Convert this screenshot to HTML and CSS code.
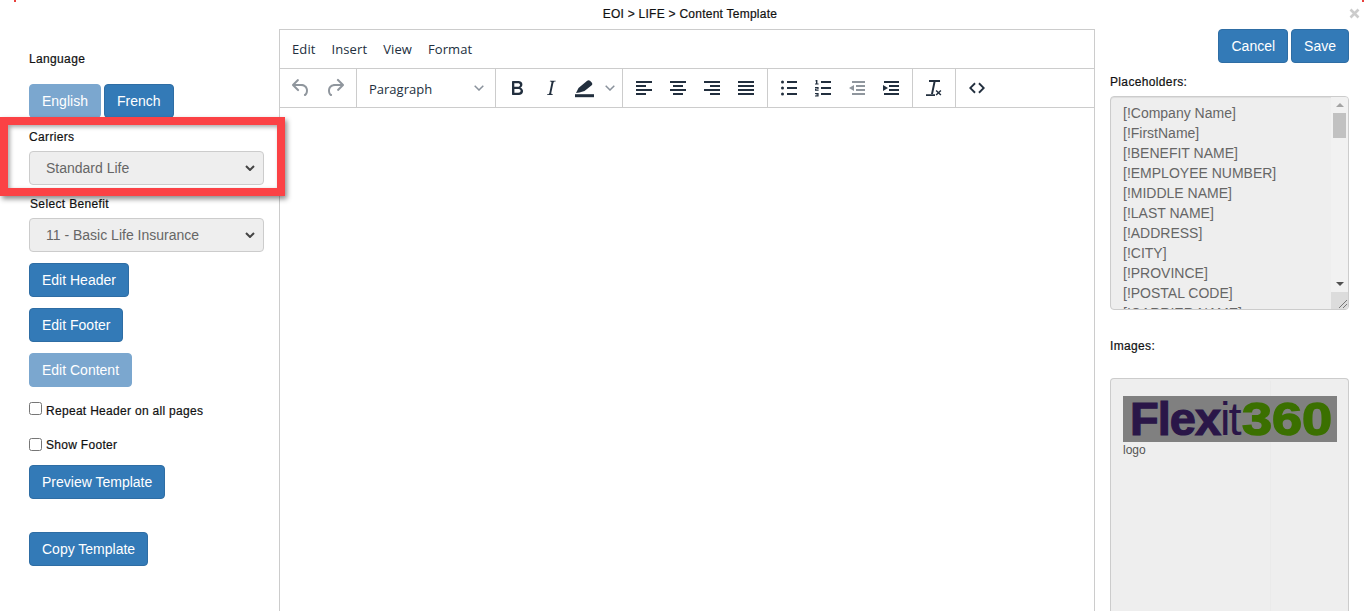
FILE: index.html

```html
<!DOCTYPE html>
<html lang="en">
<head>
  <meta charset="UTF-8">
  <title>EOI > LIFE > Content Template</title>
  <link rel="stylesheet" href="styles.css">
</head>
<body>

  <span class="corner-mark corner-left"></span>
  <span class="corner-mark corner-right"></span>

  <header class="title-bar">
    <span class="title">EOI &gt; LIFE &gt; Content Template</span>
    <svg class="close" viewBox="0 0 11 11"><path d="M1.500 1.500l8 8M9.500 1.500l-8 8" stroke="#ccc" stroke-width="2.600" fill="none"/></svg>
  </header>

  <main class="layout">

    <aside class="left-col">
      <div class="label label-language">Language</div>
      <div class="btn-row">
        <button class="btn btn-faded" type="button">English</button>
        <button class="btn" type="button">French</button>
      </div>

      <div class="label label-carriers">Carriers</div>
      <div class="select-box">
        <span>Standard Life</span>
        <svg class="select-arrow" viewBox="0 0 10 6"><path d="M1 1l4 4 4-4" fill="none" stroke="#444" stroke-width="2"/></svg>
      </div>

      <div class="label label-benefit">Select Benefit</div>
      <div class="select-box">
        <span>11 - Basic Life Insurance</span>
        <svg class="select-arrow" viewBox="0 0 10 6"><path d="M1 1l4 4 4-4" fill="none" stroke="#444" stroke-width="2"/></svg>
      </div>

      <div class="stack">
        <button class="btn" type="button">Edit Header</button>
        <button class="btn" type="button">Edit Footer</button>
        <button class="btn btn-faded" type="button">Edit Content</button>
      </div>

      <label class="check check-header"><input type="checkbox"> Repeat Header on all pages</label>
      <label class="check check-footer"><input type="checkbox"> Show Footer</label>

      <button class="btn btn-preview" type="button">Preview Template</button>
      <button class="btn btn-copy" type="button">Copy Template</button>
    </aside>

    <section class="editor">
      <nav class="menubar">
        <span class="menu-item">Edit</span>
        <span class="menu-item">Insert</span>
        <span class="menu-item">View</span>
        <span class="menu-item">Format</span>
      </nav>
      <div class="toolbar">
        <div class="tool-group">
          <span class="tool tool-off"><svg viewBox="0 0 24 24"><path d="M6.4 8H12c3.7 0 6.2 2 6.8 5.1.6 2.7-.4 5.6-2.3 6.8a1 1 0 0 1-1-1.8c1.1-.6 1.8-2.7 1.4-4.6-.5-2.1-2.1-3.5-4.9-3.5H6.4l3.3 3.3a1 1 0 1 1-1.4 1.4l-5-5a1 1 0 0 1 0-1.4l5-5a1 1 0 0 1 1.4 1.4L6.4 8z"/></svg></span>
          <span class="tool tool-off"><svg viewBox="0 0 24 24"><path d="M17.6 10H12c-2.8 0-4.4 1.4-4.9 3.5-.4 2 .3 4 1.4 4.6a1 1 0 1 1-1 1.8c-2-1.2-2.9-4.1-2.3-6.8.6-3 3-5.1 6.8-5.1h5.6l-3.3-3.3a1 1 0 1 1 1.4-1.4l5 5a1 1 0 0 1 0 1.4l-5 5a1 1 0 0 1-1.4-1.4l3.3-3.3z"/></svg></span>
        </div>
        <div class="tool-group">
          <div class="format-select">
            <span>Paragraph</span>
            <svg class="chevron" viewBox="0 0 10 6"><path d="M.7.7L5 5 9.3.7" fill="none" stroke="#8a929c" stroke-width="1.5"/></svg>
          </div>
        </div>
        <div class="tool-group">
          <span class="tool"><svg viewBox="0 0 24 24"><path d="M7.8 19c-.3 0-.5 0-.6-.2l-.2-.5V5.7c0-.2 0-.4.2-.5l.6-.2h5c1.5 0 2.7.3 3.5 1 .7.6 1.1 1.4 1.1 2.5a3 3 0 0 1-.6 1.9c-.4.6-1 1-1.6 1.2.4.1.9.3 1.3.6s.8.7 1 1.2c.4.4.5 1 .5 1.6 0 1.3-.4 2.3-1.3 3-.8.7-2.1 1-3.8 1H7.8zm5-8.3c.6 0 1.2-.1 1.6-.5.4-.3.6-.7.6-1.3 0-1.1-.8-1.7-2.3-1.7H9.3v3.5h3.4zm.5 6c.7 0 1.3-.1 1.7-.4.4-.4.6-.9.6-1.5s-.2-1-.7-1.4c-.4-.3-1-.4-2-.4H9.4v3.8h4z"/></svg></span>
          <span class="tool"><svg viewBox="0 0 24 24"><path d="M16.7 4.7l-.1.9h-.3c-.6 0-1 0-1.4.3-.3.3-.4.6-.5 1.1l-2.1 9.8v.6c0 .5.4.8 1.4.8h.2l-.2.8H8l.2-.8h.2c1.1 0 1.8-.5 2-1.5l2-9.8.1-.5c0-.6-.4-.8-1.4-.8h-.3l.2-.9h5.800z"/></svg></span>
          <span class="tool tool-split">
            <svg viewBox="0 0 24 24"><path d="M3 17l2.500-5L14.200 4.800c.8-.8 2-.8 2.800 0l1.700 1.700c.8.8.8 2 0 2.800L11.500 15l-5 1.500z"/><rect x="2" y="18.200" width="19" height="3"/></svg>
            <svg class="chevron" viewBox="0 0 10 6"><path d="M.7.7L5 5 9.3.7" fill="none" stroke="#8a929c" stroke-width="1.5"/></svg>
          </span>
        </div>
        <div class="tool-group">
          <span class="tool"><svg viewBox="0 0 24 24"><path d="M4 5h16v2H4zM4 9h10v2H4zM4 13h16v2H4zM4 17h10v2H4z"/></svg></span>
          <span class="tool"><svg viewBox="0 0 24 24"><path d="M4 5h16v2H4zM7 9h10v2H7zM4 13h16v2H4zM7 17h10v2H7z"/></svg></span>
          <span class="tool"><svg viewBox="0 0 24 24"><path d="M4 5h16v2H4zM10 9h10v2H10zM4 13h16v2H4zM10 17h10v2H10z"/></svg></span>
          <span class="tool"><svg viewBox="0 0 24 24"><path d="M4 5h16v2H4zM4 9h16v2H4zM4 13h16v2H4zM4 17h16v2H4z"/></svg></span>
        </div>
        <div class="tool-group">
          <span class="tool"><svg viewBox="0 0 24 24"><path d="M10 5h10v2H10zM10 11h10v2H10zM10 17h10v2H10z"/><circle cx="5.500" cy="6" r="1.500"/><circle cx="5.500" cy="12" r="1.500"/><circle cx="5.500" cy="18" r="1.500"/></svg></span>
          <span class="tool"><svg viewBox="0 0 24 24"><path d="M10 5h10v2H10zM10 11h10v2H10zM10 17h10v2H10zM5 4h1.400v3.600H7.600V8.600H4V7.600h1V5.200H4zM4 11h3.600v2.300H5.200v.5h2.400v1H4v-2.300h2.400v-.5H4zM4 17h3.600v3.600H4v-1h2.400v-.4H4.800v-.8h1.600V18H4z"/></svg></span>
          <span class="tool tool-off"><svg viewBox="0 0 24 24"><path d="M7 5h13v2H7zM11 9h9v2h-9zM11 13h9v2h-9zM7 17h13v2H7zM9 9v6l-5-3z"/></svg></span>
          <span class="tool"><svg viewBox="0 0 24 24"><path d="M5 5h15v2H5zM10 9h10v2H10zM10 13h10v2H10zM5 17h15v2H5zM4 9v6l5-3z"/></svg></span>
        </div>
        <div class="tool-group">
          <span class="tool"><svg viewBox="0 0 24 24"><path d="M7 4h11v2h-4.500l-2.500 12H9l2.500-12H7zM4 18.300h9v1.700H4z"/><path d="M13.600 15l1-1 1.900 1.800L18.400 14l1 1-1.900 1.800 1.900 1.800-1 1-1.900-1.800-1.900 1.800-1-1 1.900-1.800z"/></svg></span>
        </div>
        <div class="tool-group">
          <span class="tool"><svg viewBox="0 0 24 24"><path d="M9.400 6.600L4 12l5.400 5.400 1.300-1.300L6.600 12l4.100-4.100zM14.600 6.600L20 12l-5.400 5.400-1.300-1.300 4.100-4.100-4.100-4.100z"/></svg></span>
        </div>
      </div>
      <div class="edit-area"></div>
    </section>

    <aside class="right-col">
      <div class="actions">
        <button class="btn" type="button">Cancel</button>
        <button class="btn" type="button">Save</button>
      </div>

      <div class="label label-placeholders">Placeholders:</div>
      <div class="placeholders">
        <div class="placeholder-list">
          <div>[!Company Name]</div>
          <div>[!FirstName]</div>
          <div>[!BENEFIT NAME]</div>
          <div>[!EMPLOYEE NUMBER]</div>
          <div>[!MIDDLE NAME]</div>
          <div>[!LAST NAME]</div>
          <div>[!ADDRESS]</div>
          <div>[!CITY]</div>
          <div>[!PROVINCE]</div>
          <div>[!POSTAL CODE]</div>
          <div>[!CARRIER NAME]</div>
        </div>
        <div class="scrollbar">
          <span class="scroll-up"></span>
          <span class="scroll-thumb"></span>
          <span class="scroll-space"></span>
          <span class="scroll-down"></span>
          <span class="scroll-corner">
            <svg viewBox="0 0 10 10"><path d="M1 9l8-8M5 9l4-4" stroke="#777" stroke-width="1" fill="none"/></svg>
          </span>
        </div>
      </div>

      <div class="label label-images">Images:</div>
      <div class="images">
        <div class="image-tile">
          <div class="logo"><b class="logo-flex">Flex</b><span class="logo-it">it</span><b class="logo-num">360</b></div>
          <div class="image-name">logo</div>
        </div>
      </div>
    </aside>

  </main>

  <div class="highlight-box"></div>

</body>
</html>
```

FILE: styles.css

```css
html, body {
  height: 611px;
  overflow: hidden;
}

body {
  margin: 0;
  font-family: "Liberation Sans", Arial, sans-serif;
  font-size: 14px;
  color: #333;
  background-color: #fff;
}

.corner-mark {
  position: absolute;
  top: 0;
  width: 2px;
  height: 2px;
  background-color: #e8413c;
}

.corner-left {
  left: 14px;
}

.corner-right {
  right: 1px;
}

.title-bar {
  height: 29px;
  padding-left: 15px;
  display: flex;
  justify-content: center;
  align-items: flex-start;
  position: relative;
}

.title {
  margin-top: 7px;
  font-size: 12px;
  line-height: 14px;
  letter-spacing: .25px;
  color: #111;
  -webkit-text-stroke: 0.2px #111;
}

.close {
  position: absolute;
  top: 8px;
  right: 5px;
  width: 11px;
  height: 11px;
}

.layout {
  display: flex;
  height: 582px;
  align-items: stretch;
}

.left-col {
  width: 250px;
  padding-left: 29px;
  flex-shrink: 0;
}

.label {
  font-size: 12px;
  line-height: 14px;
  letter-spacing: .35px;
  color: #111;
  -webkit-text-stroke: 0.2px #111;
}

.label-language {
  margin-top: 23px;
}

.btn-row {
  display: flex;
  gap: 3px;
  margin-top: 18px;
}

.btn {
  display: block;
  height: 34px;
  padding: 0 12px;
  border: 1px solid #2e6da4;
  border-radius: 4px;
  background-color: #337ab7;
  color: #fff;
  font-family: "Liberation Sans", Arial, sans-serif;
  font-size: 14px;
}

.btn-faded {
  background-color: #7ba7cf;
  border-color: #7ba7cf;
}

.label-carriers {
  margin-top: 12px;
}

.select-box {
  width: 235px;
  height: 34px;
  box-sizing: border-box;
  margin-top: 7px;
  padding: 0 8px 0 16px;
  display: flex;
  align-items: center;
  justify-content: space-between;
  border: 1px solid #ccc;
  border-radius: 4px;
  background-color: #eee;
  color: #666;
}

.select-arrow {
  width: 10px;
  height: 6px;
}

.label-benefit {
  margin-top: 12px;
  padding-left: 1px;
}

.label-benefit + .select-box {
  margin-top: 7px;
}

.stack {
  display: flex;
  flex-direction: column;
  align-items: flex-start;
  gap: 11px;
  margin-top: 11px;
}

.check {
  display: flex;
  align-items: center;
  gap: 4px;
  font-size: 12px;
  line-height: 14px;
  letter-spacing: .3px;
  color: #111;
  -webkit-text-stroke: 0.2px #111;
}

.check input {
  width: 13px;
  height: 13px;
  margin: 0;
  position: relative;
  top: -1px;
}

.check-header {
  margin-top: 17px;
}

.check-header input {
  top: -3px;
}

.check-footer {
  margin-top: 20px;
}

.btn-preview {
  margin-top: 13px;
}

.btn-copy {
  margin-top: 33px;
}

.editor {
  width: 816px;
  box-sizing: border-box;
  flex-shrink: 0;
  border: 1px solid #ccc;
  border-bottom: none;
  font-family: "Open Sans", sans-serif;
  color: #222f3e;
}

.menubar {
  height: 38px;
  padding-left: 4px;
  display: flex;
  align-items: center;
  border-bottom: 1px solid #ccc;
}

.menu-item {
  padding: 0 8px;
  font-size: 13px;
  letter-spacing: .1px;
}

.toolbar {
  height: 38px;
  display: flex;
  border-bottom: 1px solid #ccc;
}

.tool-group {
  display: flex;
  align-items: center;
  padding: 0 4px;
  border-right: 1px solid #ccc;
}

.tool-group:last-child {
  border-right: none;
}

.tool {
  width: 34px;
  height: 34px;
  display: flex;
  align-items: center;
  justify-content: center;
  fill: #222f3e;
}

.tool svg {
  width: 24px;
  height: 24px;
}

.tool-off {
  opacity: 0.5;
}

.tool-split {
  width: 50px;
  justify-content: flex-start;
  padding-left: 5px;
  box-sizing: border-box;
}

.tool-split .chevron {
  margin-left: 8px;
}

.tool svg.chevron,
.chevron {
  width: 10px;
  height: 6px;
}

.format-select {
  width: 130px;
  box-sizing: border-box;
  padding: 1px 7px 0 8px;
  display: flex;
  align-items: center;
  justify-content: space-between;
  font-size: 13px;
}

.format-select .chevron {
  margin-top: -1px;
}

.right-col {
  flex: 1;
  padding-left: 15px;
  padding-right: 16px;
}

.actions {
  display: flex;
  justify-content: flex-end;
  gap: 3px;
}

.label-placeholders {
  margin-top: 12px;
}

.placeholders {
  height: 214px;
  box-sizing: border-box;
  margin-top: 7px;
  display: flex;
  border: 1px solid #ccc;
  border-radius: 4px;
  background-color: #eee;
  box-shadow: inset 0 1px 1px rgba(0, 0, 0, .075);
  overflow: hidden;
}

.placeholder-list {
  flex: 1;
  padding: 6px 12px;
  line-height: 20px;
  color: #666;
  overflow: hidden;
}

.scrollbar {
  width: 17px;
  display: flex;
  flex-direction: column;
  align-items: center;
  background-color: #f1f1f1;
}

.scroll-up {
  margin-top: 6px;
  border: 4px solid transparent;
  border-top: none;
  border-bottom: 4px solid #a3a3a3;
}

.scroll-thumb {
  width: 13px;
  height: 25px;
  margin-top: 6px;
  background-color: #c1c1c1;
}

.scroll-space {
  flex: 1;
}

.scroll-down {
  margin-bottom: 6px;
  border: 4px solid transparent;
  border-bottom: none;
  border-top: 4px solid #505050;
}

.scroll-corner {
  width: 17px;
  height: 17px;
  display: flex;
  align-items: flex-end;
  justify-content: flex-end;
  background-color: #dcdcdc;
}

.scroll-corner svg {
  width: 10px;
  height: 10px;
}

.label-images {
  margin-top: 29px;
}

.images {
  height: 240px;
  margin-top: 25px;
  border: 1px solid #ccc;
  border-bottom: none;
  border-radius: 4px 4px 0 0;
  background-color: #eee;
}

.image-tile {
  width: 160px;
  height: 100%;
  box-sizing: border-box;
  padding: 17px 0 0 12px;
  border-right: 1px solid #eaeaea;
  border-top-right-radius: 4px;
}

.logo {
  width: 214px;
  height: 46px;
  padding-left: 7px;
  box-sizing: border-box;
  background-color: #808080;
  font-family: "Liberation Sans", Arial, sans-serif;
  font-size: 47px;
  line-height: 46px;
  white-space: nowrap;
}

.logo-flex {
  color: #2a1648;
  letter-spacing: -1px;
  -webkit-text-stroke: 1.2px #2a1648;
}

.logo-it {
  color: #2a1648;
  font-weight: normal;
  letter-spacing: -2px;
}

.logo-num {
  display: inline-block;
  margin-left: 2px;
  color: #3b7000;
  transform: scaleX(1.15);
  transform-origin: left center;
  -webkit-text-stroke: 1.5px #3b7000;
}

.image-name {
  margin-top: 1px;
  font-size: 12px;
  line-height: 14px;
  color: #555;
}

.highlight-box {
  position: absolute;
  left: 0;
  top: 117px;
  width: 269px;
  height: 63px;
  border: 8px solid #fb4245;
  box-shadow: 2px 3px 5px rgba(0, 0, 0, .45), inset 2px 2px 4px rgba(0, 0, 0, .35);
}
```
